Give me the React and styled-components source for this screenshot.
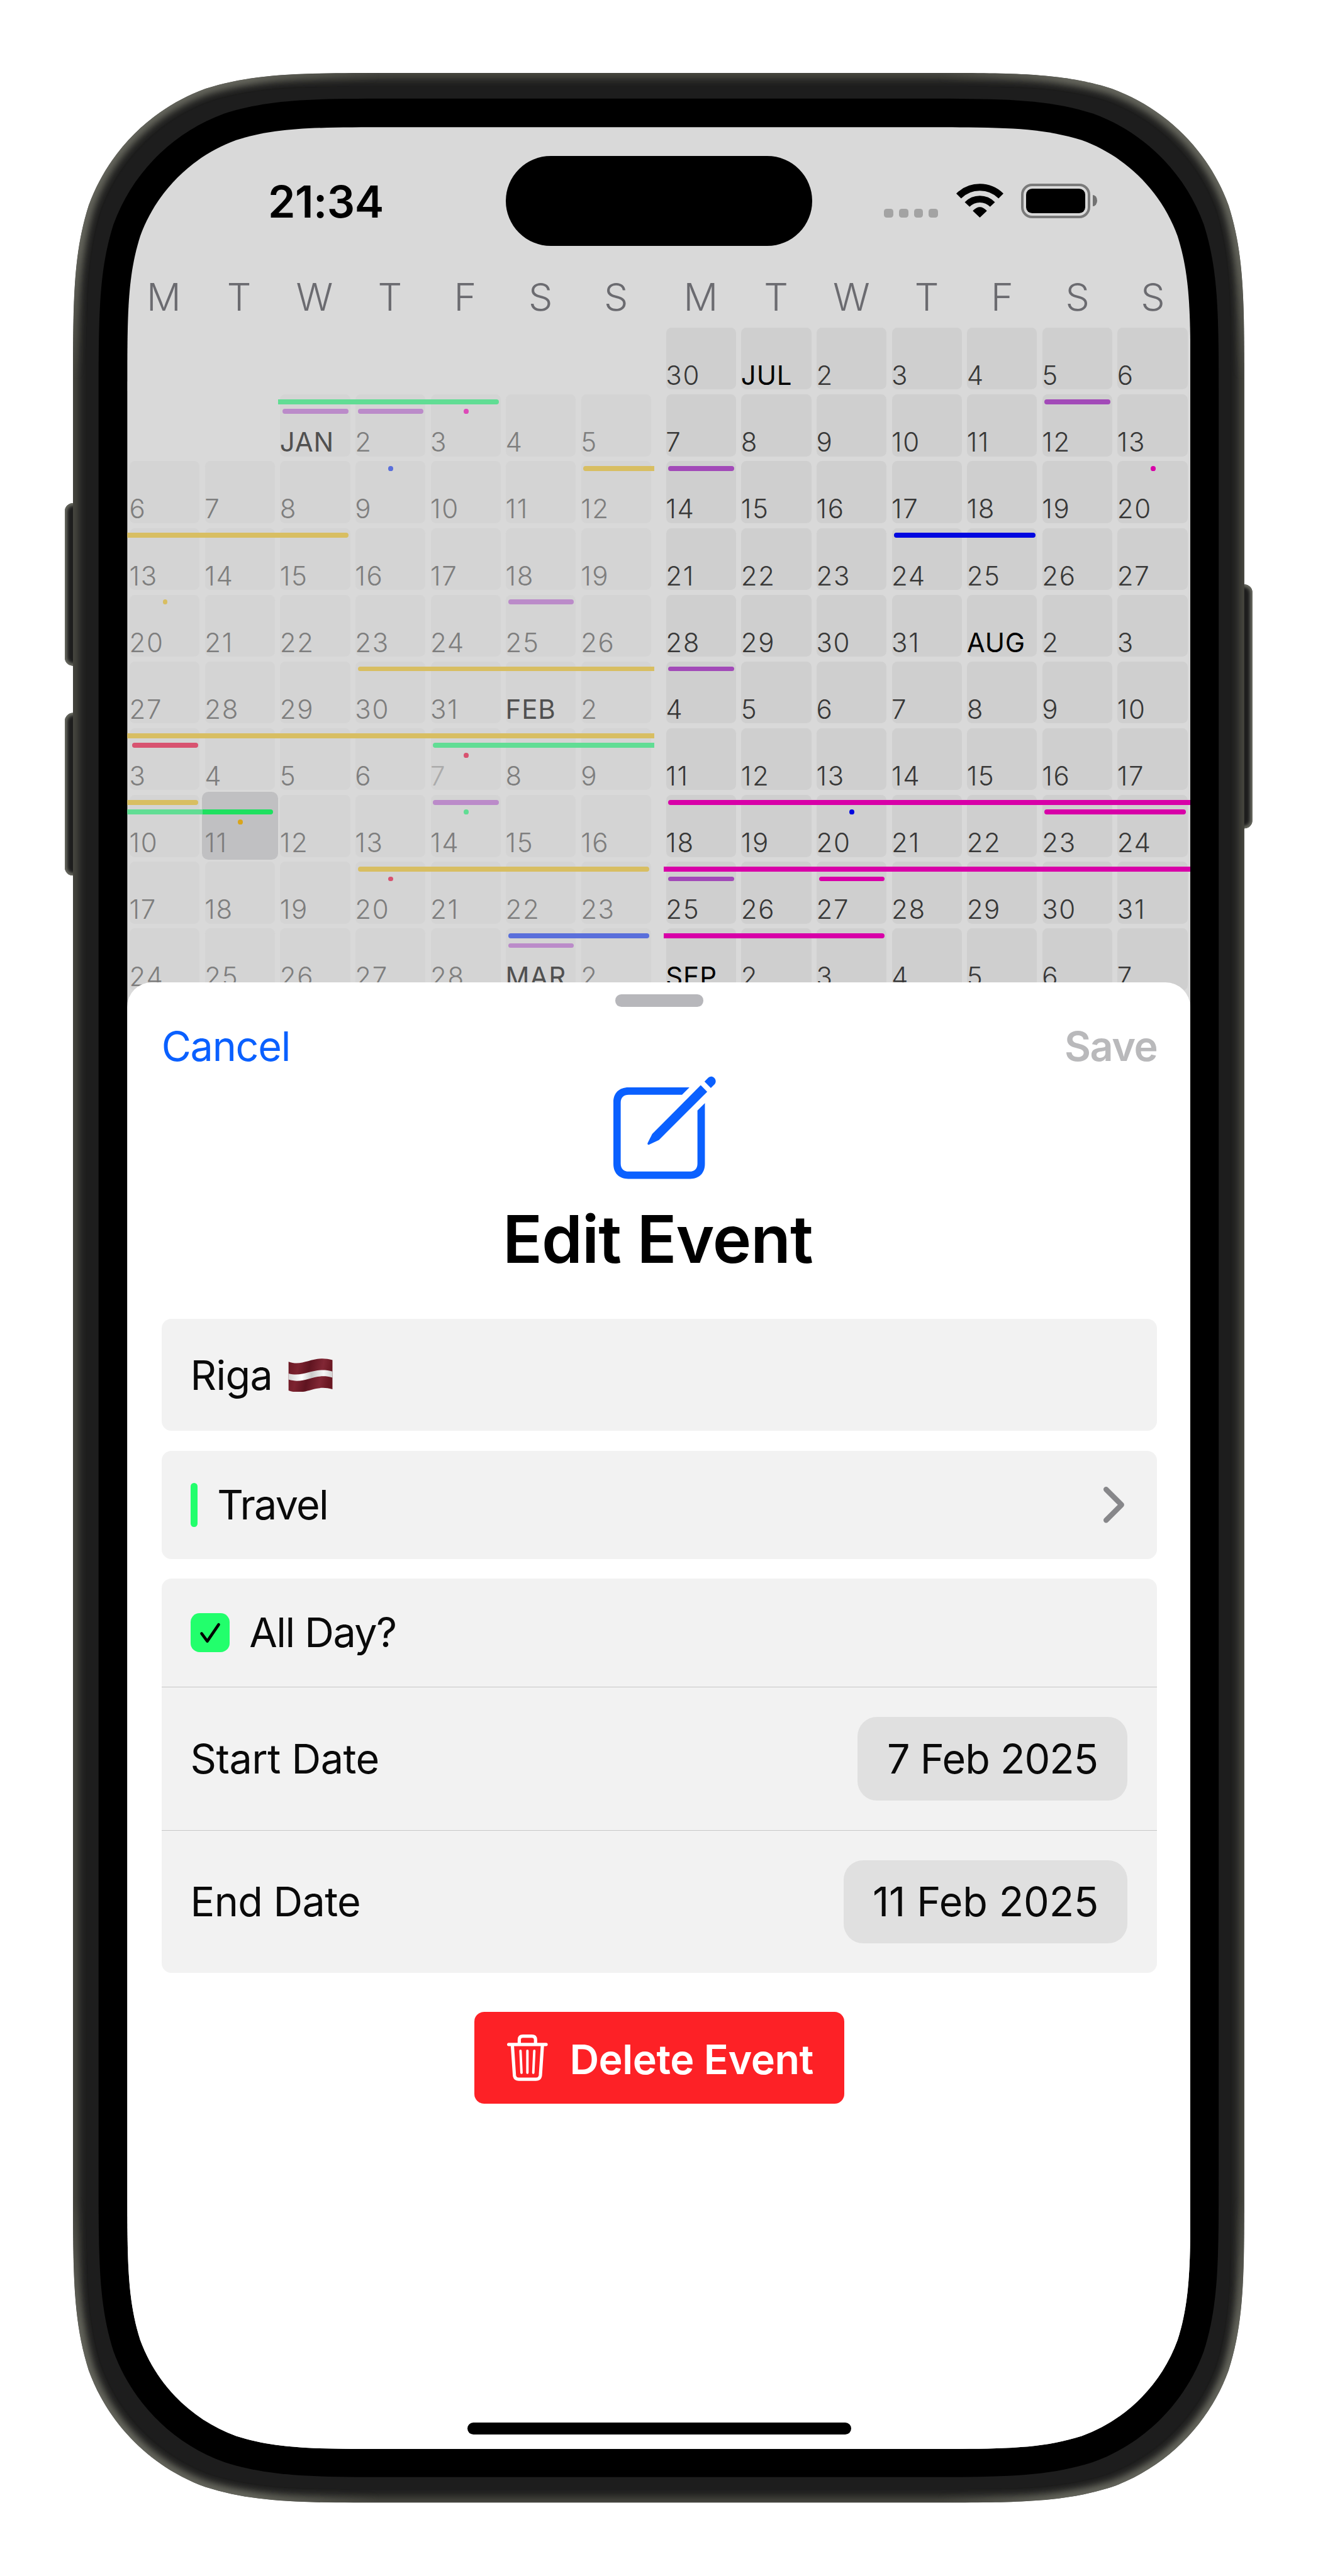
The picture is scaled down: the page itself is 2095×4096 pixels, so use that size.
import React from "react";
import styled, { createGlobalStyle } from "styled-components";

/* One rem is ten device units; UNIT is one device unit in CSS pixels. */
const UNIT = 0.64652;

const GlobalStyle = createGlobalStyle`
  html { font-size: ${UNIT * 10}px; }
  body { margin: 0; background: #fff; }
  * { box-sizing: border-box; }
`;

/* Rounded rectangle with the smooth (continuous) corners of the device. */
const smoothRect = (x, y, w, h, r, k = 1) => {
  const n = (v) => (v * k).toFixed(2);
  const pt = (cx, cy, sx, sy, a, b) => `${n(cx + sx * a * r)} ${n(cy + sy * b * r)}`;
  const a = [1.528665, 1.088493, 0.868407, 0.669934, 0.631494, 0.372824, 0.16906, 0.074911];
  const tr = (...p) => pt(x + w, y, -1, 1, ...p);
  const br = (...p) => pt(x + w, y + h, -1, -1, ...p);
  const bl = (...p) => pt(x, y + h, 1, -1, ...p);
  const tl = (...p) => pt(x, y, 1, 1, ...p);
  const out = (c) =>
    `L${c(a[0], 0)}C${c(a[1], 0)} ${c(a[2], 0)} ${c(a[4], a[7])}C${c(a[5], a[6])} ${c(a[6], a[5])} ${c(a[7], a[4])}C${c(0, a[2])} ${c(0, a[1])} ${c(0, a[0])}`;
  const back = (c) =>
    `L${c(0, a[0])}C${c(0, a[1])} ${c(0, a[2])} ${c(a[7], a[4])}C${c(a[6], a[5])} ${c(a[5], a[6])} ${c(a[4], a[7])}C${c(a[2], 0)} ${c(a[1], 0)} ${c(a[0], 0)}`;
  return `M${tl(a[0], 0)}${out(tr)}${back(br)}${out(bl)}${back(tl)}Z`;
};

const Page = styled.main`
  width: 2095px;
  height: 4096px;
  padding: 18rem;
  overflow: hidden;
  background: #fff;
  font-family: Inter, "Liberation Sans", sans-serif;
`;

const Phone = styled.div`
  position: relative;
  width: 288rem;
  height: 597.6rem;
  padding: 13.3rem;
`;

const Shell = styled.svg`
  position: absolute;
  top: 0;
  left: -2rem;
  width: 292rem;
  height: 597.6rem;
`;

const Screen = styled.div`
  position: relative;
  display: flex;
  flex-direction: column;
  width: 261.4rem;
  height: 571rem;
  overflow: hidden;
  background: #d9d9d9;
  clip-path: path("${smoothRect(0, 0, 2614, 5710, 424, UNIT)}");
`;

const StatusBar = styled.header`
  display: flex;
  align-items: center;
  flex: none;
  height: 36.2rem;
`;

const Clock = styled.time`
  width: 93rem;
  padding: 0.4rem 0 0 34.6rem;
  font-size: 10.8rem;
  line-height: 1;
  font-weight: 600;
  letter-spacing: -0.007em;
  color: #000;
`;

const Island = styled.div`
  width: 75.4rem;
  height: 22.2rem;
  border-radius: 11.1rem;
  background: #000;
`;

const Indicators = styled.div`
  display: flex;
  align-items: flex-end;
  height: 8.6rem;
  padding-left: 17.7rem;
`;

const Signal = styled.div`
  display: flex;
  gap: 1.4rem;
  margin: 0 4.5rem 0.2rem 0;
`;

const SignalDot = styled.i`
  width: 2.25rem;
  height: 2.2rem;
  border-radius: 0.7rem;
  background: #a3a3a3;
`;

const WifiIcon = styled.svg`
  width: 11.6rem;
  height: 8.4rem;
  margin: 0 4.4rem 0.2rem 0;
`;

const Battery = styled.div`
  display: flex;
  width: 17rem;
  height: 8.6rem;
  padding: 0.65rem;
  border: 0.75rem solid #7a7a7a;
  border-radius: 2.7rem;
`;

const BatteryLevel = styled.i`
  flex: 1;
  border-radius: 1.5rem;
  background: #000;
`;

const BatteryTip = styled.i`
  align-self: center;
  width: 1.1rem;
  height: 2.8rem;
  margin-left: 0.6rem;
  border-radius: 0 1.1rem 1.1rem 0 / 0 1.4rem 1.4rem 0;
  background: #727272;
`;

const Weekdays = styled.div`
  display: flex;
  flex: none;
  gap: 2.3rem;
  height: 12.5rem;
  padding-bottom: 1.5rem;
  margin-left: -0.3rem;
`;

const WeekdayGroup = styled.div`
  display: grid;
  grid-template-columns: repeat(7, 18.53rem);
  place-items: center;
  font-size: 9.4rem;
  line-height: 1;
  font-weight: 300;
  color: #6b6b70;
`;

const Calendar = styled.section`
  display: flex;
  flex: none;
  gap: 2.4rem;
  height: 167.7rem;
  overflow: hidden;
`;

const Months = styled.div`
  display: flex;
  flex-direction: column;
`;

const Week = styled.div`
  display: grid;
  grid-template-columns: repeat(7, 18.5rem);
  grid-template-rows: 1.8rem repeat(5, 1.2rem) 1fr;
  height: 16.42rem;
  flex: none;
`;

const Day = styled.div`
  grid-row: 1 / -1;
  grid-column: ${(p) => p.$col + 1};
  display: flex;
  align-items: flex-end;
  margin: ${(p) => (p.$selected ? "-0.2rem -0.1rem -0.1rem -0.2rem" : "0.6rem 0.7rem 0.6rem 0.6rem")};
  padding: ${(p) => (p.$selected ? "0 0 0.9rem 0.8rem" : "0 0 0.2rem 0")};
  border-radius: ${(p) => (p.$selected ? "1.6rem" : "1.3rem")};
  background: ${(p) => (p.$selected ? "#c0c0c2" : p.$past ? "#d4d4d4" : "#cfcfcf")};
  font-size: 6.5rem;
  line-height: 1;
  white-space: nowrap;
  text-indent: -0.1rem;
  font-weight: ${(p) => (p.$month ? 400 : 300)};
  letter-spacing: ${(p) => (p.$month ? "0.02em" : "0.04em")};
  color: ${(p) =>
    p.$dim ? "#ababab" : p.$past ? (p.$month ? "#505050" : "#7e7e7e") : p.$month ? "#000" : "#383838"};
`;

const Bar = styled.i`
  z-index: 1;
  grid-row: ${(p) => 2 + 2 * p.$level};
  grid-column: ${(p) => p.$from + 1} / ${(p) => p.$to + 2};
  margin-left: ${(p) => (p.$opens ? "1.15rem" : "0")};
  margin-right: ${(p) => (p.$closes ? "1.15rem" : "0")};
  border-radius: ${(p) => `${p.$opens ? ".6rem" : 0} ${p.$closes ? ".6rem .6rem" : "0 0"} ${p.$opens ? ".6rem" : 0}`};
  background: ${(p) => p.$color};
`;

const Dot = styled.i`
  z-index: 1;
  grid-row: ${(p) => 2 + 2 * p.$level};
  grid-column: ${(p) => p.$col + 1};
  justify-self: center;
  width: 1.2rem;
  margin-left: 0.1rem;
  border-radius: 50%;
  background: ${(p) => p.$color};
`;

const Sheet = styled.section`
  position: relative;
  display: flex;
  flex-direction: column;
  align-items: center;
  flex: 1;
  margin-top: -6.1rem;
  padding: 3rem 8.2rem 3.5rem 8.4rem;
  border-radius: 6.1rem 6.1rem 0 0;
  background: #fff;
`;

const Grabber = styled.div`
  flex: none;
  width: 21.8rem;
  height: 3rem;
  border-radius: 1.5rem;
  background: #b7b7bb;
`;

const SheetHeader = styled.div`
  display: flex;
  justify-content: space-between;
  align-self: stretch;
  margin-top: 4.8rem;
`;

const TextButton = styled.button`
  padding: 0;
  border: 0;
  background: none;
  font: ${(p) => (p.$strong ? 600 : 400)} 10rem/1 Inter, sans-serif;
  letter-spacing: ${(p) => p.$track}em;
  color: ${(p) => (p.disabled ? "#b9b9bb" : "#0a60ff")};
`;

const ComposeIcon = styled.svg`
  flex: none;
  width: 22.5rem;
  height: 22.5rem;
  margin-top: 5.1rem;
  overflow: visible;
`;

const Title = styled.h1`
  margin: 6.6rem 0.8rem 11.7rem 0;
  font-size: 16.1rem;
  line-height: 1;
  font-weight: 600;
  letter-spacing: ${(p) => p.$track}em;
  color: #000;
`;

const Form = styled.div`
  display: flex;
  flex-direction: column;
  align-self: stretch;
  gap: 4.85rem;
`;

const Card = styled.div`
  border-radius: 2.4rem;
  background: #f2f2f2;
`;

const Row = styled.div`
  display: flex;
  align-items: center;
  height: ${(p) => p.$h}rem;
  padding: 0 7.3rem 0 7.1rem;
  border-top: ${(p) => (p.$divided ? "0.3rem solid #c7c7c7" : "0")};
`;

const Label = styled.span`
  padding-top: 0.2rem;
  font-size: 10rem;
  line-height: 1;
  white-space: pre;
  letter-spacing: ${(p) => p.$track}em;
  color: #0a0a0a;
`;

const Flag = styled.svg`
  width: 11rem;
  height: 8.2rem;
  margin-left: 3.8rem;
`;

const CategoryMark = styled.i`
  width: 1.8rem;
  height: 10.8rem;
  margin-right: 4.8rem;
  border-radius: 0.8rem;
  background: #22ff6c;
`;

const Chevron = styled.svg`
  width: 5.4rem;
  height: 9.2rem;
  margin: 0 0.7rem 0 auto;
`;

const Checkbox = styled.svg`
  width: 9.7rem;
  height: 9.6rem;
  margin-right: 4.8rem;
  border-radius: 2.2rem;
  background: #22ff6c;
`;

const DatePill = styled.div`
  display: flex;
  align-items: center;
  justify-content: center;
  width: ${(p) => p.$w}rem;
  height: 20.5rem;
  margin-left: auto;
  border-radius: 4.8rem;
  background: #e0e0e0;
`;

const DeleteButton = styled.button`
  display: flex;
  align-items: center;
  flex: none;
  width: 91.1rem;
  height: 22.6rem;
  margin-top: 9.6rem;
  padding: 0 0 0 8.1rem;
  border: 0;
  border-radius: 2.4rem;
  background: #fd2126;
  color: #fff;
  font: 600 10rem/1 Inter, sans-serif;
  letter-spacing: ${(p) => p.$track}em;
  white-space: nowrap;

  span { padding-top: 0.9rem; }
`;

const TrashIcon = styled.svg`
  width: 10rem;
  height: 11.4rem;
  margin-right: 5.4rem;
`;

const HomeIndicator = styled.div`
  flex: none;
  width: 94.4rem;
  height: 3rem;
  margin-top: auto;
  border-radius: 1.5rem;
  background: #000;
`;

const NAMES = ["M", "T", "W", "T", "F", "S", "S"];

const PAST = {
  green: "#61dd94",
  purple: "#bb8bc9",
  pink: "#dd4ab8",
  blue: "#5a6fdb",
  yellow: "#d8be62",
  red: "#d85370",
};
const NOW = { purple: "#a24ab8", magenta: "#d800a8", blue: "#0008e0", green: "#1fe060", yellow: "#d9a51c" };

const bar = (color, from, to, level = 0, opens = true, closes = true) => ({ color, from, to, level, opens, closes });
const dot = (color, col, level = 0) => ({ color, col, level, dot: true });

const FIRST_HALF = [
  { days: ",,,,,," },
  {
    days: ",,JAN,2,3,4,5",
    marks: [bar(PAST.green, 2, 4, 0, false), bar(PAST.purple, 2, 2, 1), bar(PAST.purple, 3, 3, 1), dot(PAST.pink, 4, 1)],
  },
  { days: "6,7,8,9,10,11,12", marks: [dot(PAST.blue, 3), bar(PAST.yellow, 6, 6, 0, true, false)] },
  { days: "13,14,15,16,17,18,19", marks: [bar(PAST.yellow, 0, 2, 0, false)] },
  { days: "20,21,22,23,24,25,26", marks: [dot(PAST.yellow, 0), bar(PAST.purple, 5, 5)] },
  { days: "27,28,29,30,31,FEB,2", marks: [bar(PAST.yellow, 3, 6, 0, true, false)] },
  {
    days: "3,4,5,6,7,8,9",
    dim: 4,
    marks: [
      bar(PAST.yellow, 0, 6, 0, false, false),
      bar(PAST.red, 0, 0, 1),
      bar(PAST.green, 4, 6, 1, true, false),
      dot(PAST.red, 4, 2),
    ],
  },
  {
    days: "10,11,12,13,14,15,16",
    selected: 1,
    marks: [
      bar(PAST.yellow, 0, 0, 0, false),
      bar(PAST.green, 0, 0, 1, false, false),
      bar(NOW.green, 1, 1, 1, false),
      dot(NOW.yellow, 1, 2),
      bar(PAST.purple, 4, 4),
      dot(PAST.green, 4, 1),
    ],
  },
  { days: "17,18,19,20,21,22,23", marks: [bar(PAST.yellow, 3, 6), dot(PAST.red, 3, 1)] },
  { days: "24,25,26,27,28,MAR,2", marks: [bar(PAST.blue, 5, 6), bar(PAST.purple, 5, 5, 1)] },
];

const SECOND_HALF = [
  { days: "30,JUL,2,3,4,5,6" },
  { days: "7,8,9,10,11,12,13", marks: [bar(NOW.purple, 5, 5)] },
  { days: "14,15,16,17,18,19,20", marks: [bar(NOW.purple, 0, 0), dot(NOW.magenta, 6)] },
  { days: "21,22,23,24,25,26,27", marks: [bar(NOW.blue, 3, 4)] },
  { days: "28,29,30,31,AUG,2,3" },
  { days: "4,5,6,7,8,9,10", marks: [bar(NOW.purple, 0, 0)] },
  { days: "11,12,13,14,15,16,17" },
  {
    days: "18,19,20,21,22,23,24",
    marks: [bar(NOW.magenta, 0, 6, 0, true, false), dot(NOW.blue, 2, 1), bar(NOW.magenta, 5, 6, 1)],
  },
  {
    days: "25,26,27,28,29,30,31",
    marks: [bar(NOW.magenta, 0, 6, 0, false, false), bar(NOW.purple, 0, 0, 1), bar(NOW.magenta, 2, 2, 1)],
  },
  { days: "SEP,2,3,4,5,6,7", marks: [bar(NOW.magenta, 0, 2, 0, false)] },
];

function MonthColumn({ weeks, past }) {
  return (
    <Months>
      {weeks.map((week, w) => (
        <Week key={w}>
          {week.days.split(",").map((day, col) =>
            day ? (
              <Day
                key={col}
                $col={col}
                $past={past}
                $month={/[A-Z]/.test(day)}
                $dim={week.dim === col}
                $selected={week.selected === col}
              >
                {day}
              </Day>
            ) : null
          )}
          {(week.marks || []).map((m, i) =>
            m.dot ? (
              <Dot key={`m${i}`} $col={m.col} $level={m.level} $color={m.color} />
            ) : (
              <Bar
                key={`m${i}`}
                $from={m.from}
                $to={m.to}
                $level={m.level}
                $opens={m.opens}
                $closes={m.closes}
                $color={m.color}
              />
            )
          )}
        </Week>
      ))}
    </Months>
  );
}

const OUTER = smoothRect(0, 0, 2880, 5976, 516);
const BEZEL = smoothRect(63, 63, 2754, 5850, 490);

function PhoneShell() {
  return (
    <Shell viewBox="-20 0 2920 5976" aria-hidden="true">
      <defs>
        <filter id="soft" x="-5%" y="-5%" width="110%" height="110%">
          <feGaussianBlur stdDeviation="11" />
        </filter>
        <filter id="softKey" filterUnits="userSpaceOnUse" x="-80" y="900" width="3040" height="1300">
          <feGaussianBlur stdDeviation="4" />
        </filter>
        <clipPath id="body"><path d={OUTER} /></clipPath>
        <clipPath id="keys">
          <rect x="-20" y="1058" width="60" height="400" rx="20" />
          <rect x="-20" y="1574" width="60" height="400" rx="20" />
          <rect x="2840" y="1258" width="60" height="600" rx="20" />
        </clipPath>
        <radialGradient id="spot">
          <stop offset="0" stopColor="#fff" />
          <stop offset="0.5" stopColor="#fff" />
          <stop offset="1" stopColor="#000" />
        </radialGradient>
        <mask id="corners" maskUnits="userSpaceOnUse" x="-20" y="0" width="2920" height="5976">
          <rect x="-20" width="2920" height="5976" fill="#000" />
          {[[150, 150], [2730, 150], [150, 5826], [2730, 5826]].map(([cx, cy]) => (
            <circle key={`${cx}-${cy}`} cx={cx} cy={cy} r="620" fill="url(#spot)" />
          ))}
        </mask>
      </defs>
      <g clipPath="url(#keys)">
        <rect x="-20" y="0" width="2920" height="5976" fill="#1d1d1d" />
        <g fill="none" stroke="#6c6d64" strokeWidth="12" filter="url(#softKey)">
          <rect x="-20" y="1058" width="60" height="400" rx="20" />
          <rect x="-20" y="1574" width="60" height="400" rx="20" />
          <rect x="2840" y="1258" width="60" height="600" rx="20" />
        </g>
      </g>
      <g clipPath="url(#body)">
        <path d={OUTER} fill="#1d1d1d" />
        <path d={OUTER} fill="none" stroke="#4d4d45" strokeWidth="26" filter="url(#soft)" />
        <g mask="url(#corners)">
          <path d={OUTER} fill="none" stroke="#75766c" strokeWidth="18" filter="url(#soft)" />
        </g>
      </g>
      <path d={BEZEL} fill="#000" />
    </Shell>
  );
}

export default function App() {
  return (
    <>
      <GlobalStyle />
      <Page>
        <Phone>
          <PhoneShell />
          <Screen>
            <StatusBar>
              <Clock>21:34</Clock>
              <Island />
              <Indicators>
                <Signal>
                  {[0, 1, 2, 3].map((i) => (
                    <SignalDot key={i} />
                  ))}
                </Signal>
                <WifiIcon viewBox="0 0 116 84">
                  <path d="M6 30.5A73.6 73.6 0 0 1 110 30.5" fill="none" stroke="#000" strokeWidth="17" />
                  <path d="M26.8 51.3A43.2 43.2 0 0 1 89.2 51.3" fill="none" stroke="#000" strokeWidth="16.5" />
                  <path d="M42 67Q58 50 74 67L58 82Z" stroke="#000" strokeWidth="2" strokeLinejoin="round" />
                </WifiIcon>
                <Battery>
                  <BatteryLevel />
                </Battery>
                <BatteryTip />
              </Indicators>
            </StatusBar>
            <Weekdays>
              {[0, 1].map((g) => (
                <WeekdayGroup key={g}>
                  {NAMES.map((n, i) => (
                    <span key={i}>{n}</span>
                  ))}
                </WeekdayGroup>
              ))}
            </Weekdays>
            <Calendar>
              <MonthColumn weeks={FIRST_HALF} past />
              <MonthColumn weeks={SECOND_HALF} />
            </Calendar>
            <Sheet>
              <Grabber />
              <SheetHeader>
                <TextButton $track={-0.0195}>Cancel</TextButton>
                <TextButton $track={-0.0221} $strong disabled>
                  Save
                </TextButton>
              </SheetHeader>
              <ComposeIcon viewBox="144 224 676 676" fill="#0a60ff">
                <path
                  fillRule="evenodd"
                  d="M706 224H256C186 224 144 266 144 334V789C144 858 186 900 254 900H710C778 900 820 858 820 789V340L765 395V786C765 824 744 846 706 846H258C220 846 198 824 198 786V338C198 300 220 279 258 279H651Z"
                />
                <path d="M789 208L837 256L480 613L408 647C400 650 394 645 397 635L431 568Z" />
                <path d="M817 181L842 156C854 142 872 139 888 153C902 166 905 186 891 202L864 229Z" />
              </ComposeIcon>
              <Title $track={-0.009}>Edit Event</Title>
              <Form>
                <Card>
                  <Row $h={27.55}>
                    <Label $track={-0.01}>Riga</Label>
                    <Flag viewBox="0 0 110 82">
                      <defs>
                        <linearGradient id="wave" x1="0" y1="0" x2="1" y2="0.15">
                          <stop offset="0" stopColor="#6a1823" />
                          <stop offset="0.25" stopColor="#7d2330" />
                          <stop offset="0.5" stopColor="#5f1420" />
                          <stop offset="0.8" stopColor="#822735" />
                          <stop offset="1" stopColor="#6a1722" />
                        </linearGradient>
                        <linearGradient id="band" x1="0" y1="0" x2="1" y2="0">
                          <stop offset="0" stopColor="#d5d5d5" />
                          <stop offset="0.3" stopColor="#fff" />
                          <stop offset="0.52" stopColor="#c9c9c9" />
                          <stop offset="0.8" stopColor="#f6f6f6" />
                          <stop offset="1" stopColor="#cfcfcf" />
                        </linearGradient>
                      </defs>
                      <path d="M1 8C38 22 62 -10 109 4V76C64 62 44 94 1 79Z" fill="url(#wave)" />
                      <path d="M1 37C40 48 64 19 109 32V47C64 34 42 65 1 52Z" fill="url(#band)" />
                    </Flag>
                  </Row>
                </Card>
                <Card>
                  <Row $h={26.6}>
                    <CategoryMark />
                    <Label $track={-0.027}>Travel</Label>
                    <Chevron viewBox="0 0 54 92">
                      <path d="M8 8L46 46L8 84" fill="none" stroke="#87878a" strokeWidth="13" strokeLinecap="round" strokeLinejoin="round" />
                    </Chevron>
                  </Row>
                </Card>
                <Card>
                  <Row $h={26.6}>
                    <Checkbox viewBox="0 0 97 96">
                      <path d="M27 50L41 69L69 28" fill="none" stroke="#000" strokeWidth="7" strokeLinecap="round" strokeLinejoin="round" />
                    </Checkbox>
                    <Label $track={-0.0235}>All Day?</Label>
                  </Row>
                  <Row $h={35.2} $divided>
                    <Label $track={-0.0074}>Start Date</Label>
                    <DatePill $w={66.4}>
                      <Label $track={-0.015}>7 Feb 2025</Label>
                    </DatePill>
                  </Row>
                  <Row $h={35.2} $divided>
                    <Label $track={-0.0105}>End Date</Label>
                    <DatePill $w={69.8}>
                      <Label $track={-0.0023}>11 Feb 2025</Label>
                    </DatePill>
                  </Row>
                </Card>
              </Form>
              <DeleteButton $track={-0.0073}>
                <TrashIcon viewBox="0 0 100 114" fill="none" stroke="#fff" strokeLinecap="round" strokeLinejoin="round">
                  <path d="M4 24.5H96" strokeWidth="8" />
                  <path d="M30 24V13Q30 4 39 4H61Q70 4 70 13V24" strokeWidth="8" />
                  <path d="M13 26L18 100Q19 110 29 110H71Q81 110 82 100L87 26" strokeWidth="8" />
                  <path d="M33 40L35.5 94M50 40V94M67 40L64.5 94" strokeWidth="6" />
                </TrashIcon>
                <span>Delete Event</span>
              </DeleteButton>
              <HomeIndicator />
            </Sheet>
          </Screen>
        </Phone>
      </Page>
    </>
  );
}
